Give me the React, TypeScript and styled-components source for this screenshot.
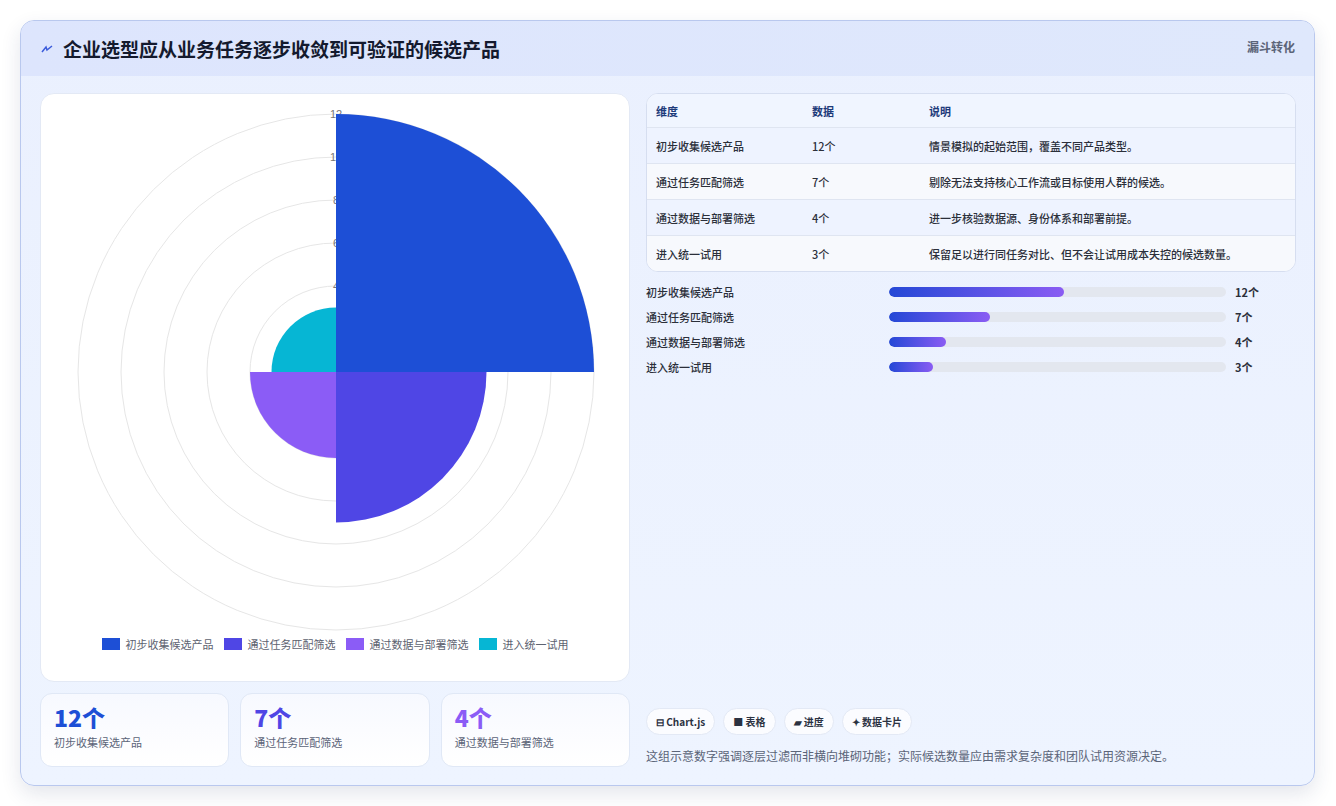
import React from "react";
import styled, { createGlobalStyle } from "styled-components";

const Global = createGlobalStyle`
  body { margin: 0; background: #ffffff; font-family: "Noto Sans CJK SC", "Noto Sans", sans-serif; }
`;

const Page = styled.div`
  padding: 20px 21px 20px 20px;
  height: 806px;
  box-sizing: border-box;
`;

const Card = styled.div`
  height: 766px;
  box-sizing: border-box;
  border: 1px solid #b9c8ee;
  border-radius: 14px;
  background: linear-gradient(180deg, #eaf0fe 0%, #eef4ff 100%);
  box-shadow: 0 8px 20px rgba(30, 50, 100, 0.12);
  overflow: hidden;
  display: flex;
  flex-direction: column;
`;

const Header = styled.div`
  height: 55px;
  background: linear-gradient(90deg, #dde5fd, #dfe8fc);
  display: flex;
  align-items: center;
  justify-content: space-between;
  padding: 0 19px 0 20px;
  flex-shrink: 0;
`;

const Title = styled.h1`
  margin: 0;
  font-size: 19px;
  font-weight: 700;
  color: #141a2e;
  display: flex;
  align-items: center;
  gap: 10px;
  line-height: 1;
`;

const Tag = styled.span`
  font-size: 12px;
  color: #5b6478;
  font-weight: 600;
  align-self: flex-start;
  margin-top: 17px;
`;

const Body = styled.div`
  flex: 1;
  display: grid;
  grid-template-columns: 590px 1fr;
  gap: 16px;
  padding: 17px 18px 18px 19px;
`;

const LeftCol = styled.div`
  display: flex;
  flex-direction: column;
  gap: 11px;
`;

const ChartPanel = styled.div`
  height: 589px;
  box-sizing: border-box;
  background: #fff;
  border: 1px solid #e3e9f5;
  border-radius: 14px;
  display: flex;
  flex-direction: column;
  align-items: center;
`;

const Legend = styled.div`
  display: flex;
  gap: 10px;
  margin-top: 2px;
  font-size: 11px;
  color: #5d6270;
`;

const LegendItem = styled.span`
  display: flex;
  align-items: center;
  gap: 6px;
`;

const Swatch = styled.span<{ $c: string }>`
  width: 18px;
  height: 12px;
  background: ${(p) => p.$c};
`;

const Stats = styled.div`
  display: grid;
  grid-template-columns: repeat(3, 1fr);
  gap: 11px;
`;

const Stat = styled.div`
  height: 74px;
  box-sizing: border-box;
  border: 1px solid #e0e8f6;
  border-radius: 12px;
  background: linear-gradient(180deg, #f7f9ff, #ffffff);
  padding: 10px 13px;
`;

const StatNum = styled.div<{ $c: string }>`
  font-size: 23px;
  font-weight: 800;
  color: ${(p) => p.$c};
  line-height: 1.2;
`;

const StatLabel = styled.div`
  font-size: 11px;
  color: #5b6478;
  margin-top: 2px;
`;

const RightCol = styled.div`
  display: flex;
  flex-direction: column;
`;

const Table = styled.div`
  border: 1px solid #d6def0;
  border-radius: 12px;
  overflow: hidden;
  background: #fff;
`;

const Row = styled.div<{ $bg: string; $head?: boolean }>`
  display: grid;
  grid-template-columns: 156px 117px 1fr;
  height: ${(p) => (p.$head ? 33 : 35)}px;
  align-items: center;
  padding-left: 9px;
  background: ${(p) => p.$bg};
  border-bottom: 1px solid #dfe5f1;
  font-size: 11px;
  font-weight: ${(p) => (p.$head ? 700 : 500)};
  color: ${(p) => (p.$head ? "#1d3a7a" : "#2b2f3a")};
  &:last-child { border-bottom: none; }
`;

const Bars = styled.div`
  display: flex;
  flex-direction: column;
  gap: 9px;
  margin-top: 12px;
`;

const BarRow = styled.div`
  display: grid;
  grid-template-columns: 243px 337px 1fr;
  gap: 0;
  align-items: center;
  height: 16px;
  font-size: 11px;
  color: #2b2f3a;
  font-weight: 500;
`;

const Track = styled.div`
  height: 10px;
  border-radius: 5px;
  background: #e3e7ef;
  overflow: hidden;
`;

const Fill = styled.div`
  height: 100%;
  border-radius: 5px;
  background: linear-gradient(90deg, #2448d6, #8a5cf3);
`;

const BarVal = styled.span`
  font-weight: 700;
  padding-left: 9px;
`;

const Spacer = styled.div`
  flex: 1;
`;

const Chips = styled.div`
  display: flex;
  gap: 8px;
`;

const Chip = styled.span`
  height: 27px;
  box-sizing: border-box;
  padding: 0 9px;
  border-radius: 14px;
  background: #fbfcff;
  border: 1px solid #e3e9f5;
  display: flex;
  align-items: center;
  gap: 4px;
  font-size: 10px;
  font-weight: 700;
  color: #2b3242;
`;

const Note = styled.p`
  margin: 12px 0 3px;
  font-size: 12px;
  color: #5b6478;
`;

const cx = 295, cy = 278, unit = 21.5;
function sector(a0: number, a1: number, r: number) {
  const p = (a: number) => [cx + r * Math.sin(a), cy - r * Math.cos(a)];
  const [x0, y0] = p(a0);
  const [x1, y1] = p(a1);
  return `M${cx},${cy} L${x0},${y0} A${r},${r} 0 0 1 ${x1},${y1} Z`;
}

const Polar = () => (
  <svg width="588" height="540" viewBox="0 0 588 540">
    {[2, 4, 6, 8, 10, 12].map((v) => (
      <circle key={v} cx={cx} cy={cy} r={v * unit} fill="none" stroke="#e6e6e6" strokeWidth="1" />
    ))}
    {[12, 10, 8, 6, 4].map((v) => (
      <text key={v} x={cx} y={cy - v * unit + 4} fontSize="11" fill="#777" textAnchor="middle" fontFamily="Liberation Sans, sans-serif">{v}</text>
    ))}
    <path d={sector(0, Math.PI / 2, 12 * unit)} fill="#1d4fd6" />
    <path d={sector(Math.PI / 2, Math.PI, 7 * unit)} fill="#4f46e5" />
    <path d={sector(Math.PI, 1.5 * Math.PI, 4 * unit)} fill="#8b5cf6" />
    <path d={sector(1.5 * Math.PI, 2 * Math.PI, 3 * unit)} fill="#06b6d4" />
  </svg>
);

const items = [
  { n: "初步收集候选产品", v: "12个", d: "情景模拟的起始范围，覆盖不同产品类型。", w: 52, c: "#1d4fd6" },
  { n: "通过任务匹配筛选", v: "7个", d: "剔除无法支持核心工作流或目标使用人群的候选。", w: 30, c: "#4f46e5" },
  { n: "通过数据与部署筛选", v: "4个", d: "进一步核验数据源、身份体系和部署前提。", w: 17, c: "#8b5cf6" },
  { n: "进入统一试用", v: "3个", d: "保留足以进行同任务对比、但不会让试用成本失控的候选数量。", w: 13, c: "#06b6d4" },
];

export default function App() {
  return (
    <Page>
      <Global />
      <Card>
        <Header>
          <Title>
            <svg width="12" height="10" viewBox="0 0 12 10"><path d="M1 8 L5 3 L6 6 L11 2" stroke="#3b5bdb" strokeWidth="1.5" fill="none" /></svg>
            企业选型应从业务任务逐步收敛到可验证的候选产品
          </Title>
          <Tag>漏斗转化</Tag>
        </Header>
        <Body>
          <LeftCol>
            <ChartPanel>
              <Polar />
              <Legend>
                {items.map((i) => (
                  <LegendItem key={i.n}><Swatch $c={i.c} />{i.n}</LegendItem>
                ))}
              </Legend>
            </ChartPanel>
            <Stats>
              {items.slice(0, 3).map((i) => (
                <Stat key={i.n}>
                  <StatNum $c={i.c}>{i.v}</StatNum>
                  <StatLabel>{i.n}</StatLabel>
                </Stat>
              ))}
            </Stats>
          </LeftCol>
          <RightCol>
            <Table>
              <Row $bg="#f0f5ff" $head><span>维度</span><span>数据</span><span>说明</span></Row>
              {items.map((i, k) => (
                <Row key={i.n} $bg={k % 2 === 0 ? "#eef3ff" : "#f7f9fd"}>
                  <span>{i.n}</span><span>{i.v}</span><span>{i.d}</span>
                </Row>
              ))}
            </Table>
            <Bars>
              {items.map((i) => (
                <BarRow key={i.n}>
                  <span>{i.n}</span>
                  <Track><Fill style={{ width: `${i.w}%` }} /></Track>
                  <BarVal>{i.v}</BarVal>
                </BarRow>
              ))}
            </Bars>
            <Spacer />
            <Chips>
              <Chip>⊟ Chart.js</Chip>
              <Chip>■ 表格</Chip>
              <Chip>▰ 进度</Chip>
              <Chip>✦ 数据卡片</Chip>
            </Chips>
            <Note>这组示意数字强调逐层过滤而非横向堆砌功能；实际候选数量应由需求复杂度和团队试用资源决定。</Note>
          </RightCol>
        </Body>
      </Card>
    </Page>
  );
}
